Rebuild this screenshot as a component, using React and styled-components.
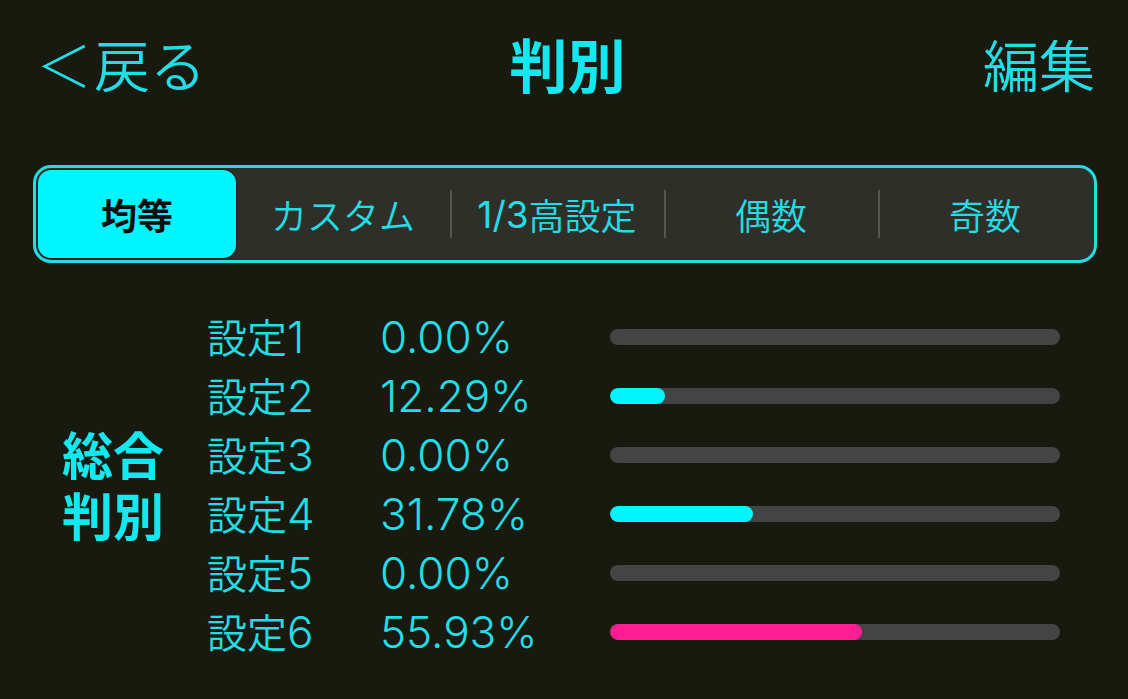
import React from "react";
import styled, { createGlobalStyle } from "styled-components";

const GlobalStyle = createGlobalStyle`
  html, body {
    margin: 0;
    padding: 0;
    background: #181a0f;
  }
  body {
    font-family: "Noto Sans CJK JP", "Noto Sans", sans-serif;
    color: #22dde5;
  }
`;

const Page = styled.div`
  width: 1128px;
  height: 699px;
  box-sizing: border-box;
  padding: 0 31px 0 33px;
  background: #181a0f;
  overflow: hidden;
`;

const Header = styled.div`
  display: grid;
  grid-template-columns: 1fr auto 1fr;
  align-items: center;
  height: 125px;
  padding: 0 2px 0 7px;
  margin-bottom: 40px;
`;

const NavButton = styled.div`
  font-size: 56px;
  font-weight: 350;
  color: #22dde5;
  justify-self: ${(p) => (p.$right ? "end" : "start")};
  line-height: 1;
  display: flex;
  align-items: center;
`;

const Chevron = styled.span`
  font-size: 56px;
  font-weight: 300;
  margin-left: -4px;
  margin-right: 2px;
`;

const Title = styled.div`
  font-size: 58px;
  font-weight: 700;
  color: #12e8f0;
  line-height: 1;
`;

const Segmented = styled.div`
  display: flex;
  align-items: center;
  height: 98px;
  box-sizing: border-box;
  border: 3px solid #22dde5;
  border-radius: 18px;
  background: #2f2f2a;
  padding: 2px;
`;

const Segment = styled.div`
  position: relative;
  flex: ${(p) => (p.$first ? "0 0 198px" : "1 1 0")};
  height: 100%;
  display: flex;
  align-items: center;
  justify-content: center;
  font-size: 36px;
  font-weight: ${(p) => (p.$active ? 700 : 350)};
  color: ${(p) => (p.$active ? "#0b0b0b" : "#22dde5")};
  background: ${(p) => (p.$active ? "#00f5ff" : "transparent")};
  border-radius: 13px;
  box-shadow: ${(p) => (p.$active ? "0 0 0 1px #1c1c18" : "none")};
  ${(p) =>
    p.$divider &&
    `
    &::before {
      content: "";
      position: absolute;
      left: 0;
      top: 20px;
      bottom: 20px;
      width: 2px;
      background: #55564f;
    }
  `}
`;

const SegDigits = styled.span`
  font-family: "Inter", "Liberation Sans", sans-serif;
  font-size: 37px;
  font-weight: 400;
`;

const Results = styled.div`
  display: flex;
  align-items: center;
  margin-top: 44px;
`;

const Verdict = styled.div`
  width: 145px;
  padding-left: 29px;
  display: flex;
  flex-direction: column;
`;

const VerdictLine = styled.div`
  font-size: 51px;
  font-weight: 700;
  line-height: 61px;
  color: #12e8f0;
`;

const Rows = styled.div`
  display: flex;
  flex-direction: column;
`;

const Row = styled.div`
  display: grid;
  grid-template-columns: 173px 230px 450px;
  align-items: center;
  height: 59px;
`;

const Label = styled.div`
  font-size: 40px;
  font-weight: 350;
  line-height: 1;
  color: #22dde5;
  display: flex;
  align-items: baseline;
`;

const Digit = styled.span`
  font-family: "Inter", "Liberation Sans", sans-serif;
  font-size: 44px;
  font-weight: 350;
`;

const Percent = styled.div`
  font-family: "Inter", "Liberation Sans", sans-serif;
  font-size: 44px;
  font-weight: 350;
  line-height: 1;
  color: #22dde5;
`;

const Track = styled.div`
  height: 16px;
  border-radius: 8px;
  background: #444444;
  overflow: hidden;
`;

const Fill = styled.div`
  height: 100%;
  border-radius: 8px;
  background: ${(p) => p.$color};
`;

const segments = [
  { key: "even", label: "均等" },
  { key: "custom", label: "カスタム" },
  { key: "high", label: <><SegDigits>1/3</SegDigits>高設定</> },
  { key: "gusu", label: "偶数" },
  { key: "kisu", label: "奇数" },
];

const data = [
  { n: 1, value: 0 },
  { n: 2, value: 12.29 },
  { n: 3, value: 0 },
  { n: 4, value: 31.78 },
  { n: 5, value: 0 },
  { n: 6, value: 55.93 },
];

export default function App() {
  const max = Math.max(...data.map((d) => d.value));
  return (
    <>
      <GlobalStyle />
      <Page>
        <Header>
          <NavButton>
            <Chevron>＜</Chevron>戻る
          </NavButton>
          <Title>判別</Title>
          <NavButton $right>編集</NavButton>
        </Header>
        <Segmented>
          {segments.map((s, i) => (
            <Segment
              key={s.key}
              $first={i === 0}
              $active={i === 0}
              $divider={i > 1}
            >
              {s.label}
            </Segment>
          ))}
        </Segmented>
        <Results>
          <Verdict>
            <VerdictLine>総合</VerdictLine>
            <VerdictLine>判別</VerdictLine>
          </Verdict>
          <Rows>
            {data.map((d) => (
              <Row key={d.n}>
                <Label>
                  設定<Digit>{d.n}</Digit>
                </Label>
                <Percent>{d.value.toFixed(2)}%</Percent>
                <Track>
                  <Fill
                    $color={d.value === max ? "#ff1d93" : "#00f5ff"}
                    style={{ width: `${d.value}%` }}
                  />
                </Track>
              </Row>
            ))}
          </Rows>
        </Results>
      </Page>
    </>
  );
}
